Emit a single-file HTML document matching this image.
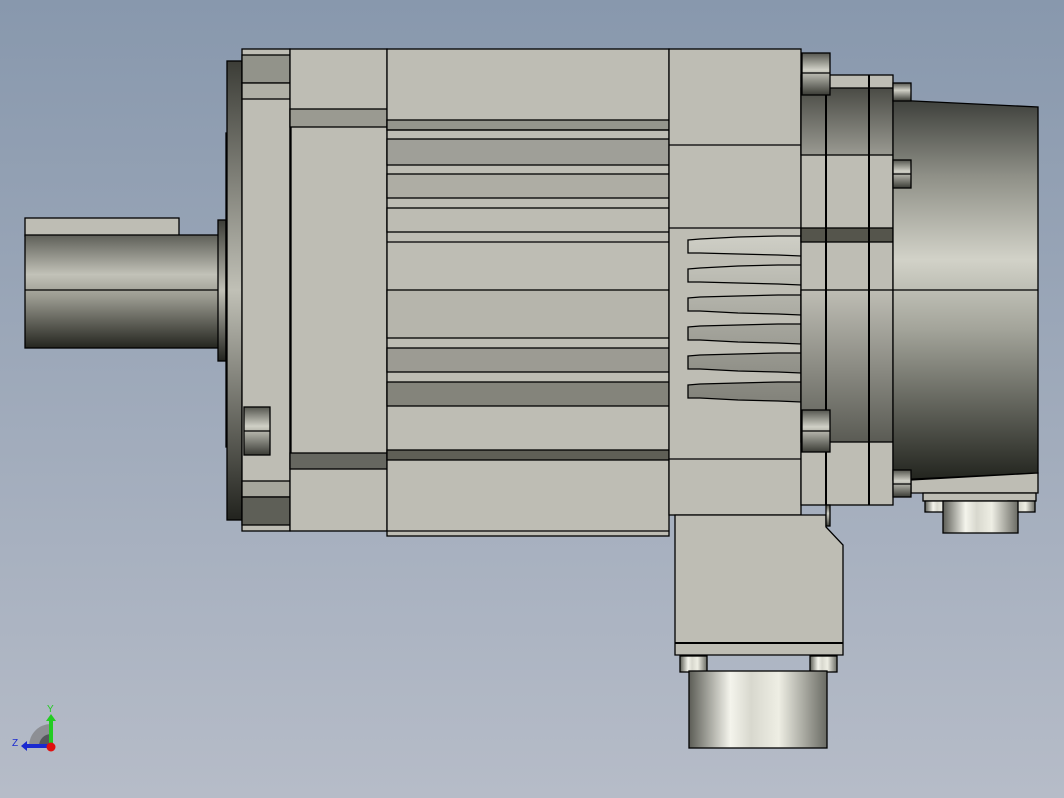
<!DOCTYPE html>
<html><head><meta charset="utf-8"><style>
html,body{margin:0;padding:0;width:1064px;height:798px;overflow:hidden}
svg{display:block}
</style></head><body>
<svg width="1064" height="798" viewBox="0 0 1064 798" xmlns="http://www.w3.org/2000/svg">
<defs>
<linearGradient id="bg" x1="0" y1="0" x2="0" y2="1"><stop offset="0" stop-color="#8898ad"/><stop offset="1" stop-color="#b6bcc8"/></linearGradient>
<linearGradient id="cylV" x1="0" y1="0" x2="0" y2="1"><stop offset="0" stop-color="#5e5f58"/><stop offset="0.35" stop-color="#c2c2b8"/><stop offset="0.55" stop-color="#9a9a90"/><stop offset="1" stop-color="#24251f"/></linearGradient>
<linearGradient id="flV" x1="0" y1="0" x2="0" y2="1"><stop offset="0" stop-color="#3c3d37"/><stop offset="0.5" stop-color="#c0c0b6"/><stop offset="1" stop-color="#22231e"/></linearGradient>
<linearGradient id="enc" x1="0" y1="0" x2="0" y2="1"><stop offset="0" stop-color="#3e403b"/><stop offset="0.2" stop-color="#8f9087"/><stop offset="0.42" stop-color="#d2d2c8"/><stop offset="0.6" stop-color="#a4a59b"/><stop offset="1" stop-color="#22241e"/></linearGradient>
<linearGradient id="ringT" x1="0" y1="0" x2="0" y2="1"><stop offset="0" stop-color="#4a4b45"/><stop offset="1" stop-color="#9a9a92"/></linearGradient>
<linearGradient id="ringB" x1="0" y1="0" x2="0" y2="1"><stop offset="0" stop-color="#bebdb4"/><stop offset="1" stop-color="#5a5b54"/></linearGradient>
<linearGradient id="cylH" x1="0" y1="0" x2="1" y2="0"><stop offset="0" stop-color="#5c5d56"/><stop offset="0.3" stop-color="#f4f4ec"/><stop offset="0.45" stop-color="#d8d8ce"/><stop offset="0.65" stop-color="#eeeee4"/><stop offset="1" stop-color="#6a6b64"/></linearGradient>
<linearGradient id="bolt" x1="0" y1="0" x2="0" y2="1"><stop offset="0" stop-color="#55564f"/><stop offset="0.4" stop-color="#d0d0c6"/><stop offset="1" stop-color="#3a3b35"/></linearGradient>
<linearGradient id="fin" gradientUnits="userSpaceOnUse" x1="0" y1="236" x2="0" y2="402"><stop offset="0" stop-color="#cfcfc6"/><stop offset="1" stop-color="#82827a"/></linearGradient>
</defs>
<rect width="1064" height="798" fill="url(#bg)"/>
<g stroke="#000" stroke-width="1.3">
<rect x="25" y="218" width="154" height="18" fill="#bebdb4"/>
<rect x="25" y="235" width="194" height="113" fill="url(#cylV)"/>
<line x1="25" y1="290" x2="242" y2="290"/>
<rect x="218" y="220" width="8" height="141" fill="url(#flV)"/>
<rect x="226" y="133" width="6" height="314" fill="url(#flV)"/>
<rect x="227" y="61" width="15" height="459" fill="url(#flV)"/>
<rect x="242" y="49" width="48" height="482" fill="#bebdb4"/>
<rect x="242" y="55" width="48" height="28" fill="#92938a"/>
<rect x="242" y="83" width="48" height="16" fill="#b0b0a6"/>
<rect x="242" y="481" width="48" height="16" fill="#a6a69c"/>
<rect x="242" y="497" width="48" height="28" fill="#5e5f57"/>
<rect x="244" y="407" width="26" height="48" fill="url(#bolt)"/>
<line x1="244" y1="431" x2="270" y2="431"/>
<rect x="290" y="49" width="97" height="482" fill="#bebdb4"/>
<rect x="290" y="109" width="97" height="18" fill="#9a9a91"/>
<line x1="291" y1="127" x2="291" y2="453"/>
<rect x="290" y="453" width="97" height="16" fill="#666760"/>
<rect x="387" y="49" width="282" height="487" fill="#bebdb4"/>
<rect x="387" y="120" width="282" height="10" fill="#94958c"/>
<line x1="387" y1="130" x2="669" y2="130"/>
<rect x="387" y="139" width="282" height="26" fill="#9f9f98"/>
<rect x="387" y="174" width="282" height="24" fill="#aeada4"/>
<rect x="387" y="208" width="282" height="24" fill="#bdbcb3"/>
<line x1="387" y1="242" x2="669" y2="242"/>
<rect x="387" y="290" width="282" height="48" fill="#b6b5ac"/>
<rect x="387" y="348" width="282" height="24" fill="#9c9b93"/>
<rect x="387" y="382" width="282" height="24" fill="#84847b"/>
<rect x="387" y="450" width="282" height="10" fill="#5f5f56"/>
<line x1="387" y1="531" x2="669" y2="531"/>
<rect x="669" y="49" width="132" height="466" fill="#bebdb4"/>
<line x1="669" y1="145" x2="801" y2="145"/>
<line x1="669" y1="228" x2="801" y2="228"/>
<line x1="669" y1="459" x2="801" y2="459"/>
<g fill="url(#fin)">
<path d="M688 240 L700 239 L738 237 L778 236 L801 236 L801 256 L778 255 L738 254 L700 253 L688 253 Z"/>
<path d="M688 269 L700 268 L738 266 L778 265 L801 265 L801 285 L778 284 L738 283 L700 282 L688 282 Z"/>
<path d="M688 298 L700 297 L738 296 L778 295 L801 295 L801 315 L778 314 L738 313 L700 311 L688 311 Z"/>
<path d="M688 327 L700 326 L738 325 L778 324 L801 324 L801 344 L778 343 L738 342 L700 340 L688 340 Z"/>
<path d="M688 356 L700 355 L738 354 L778 353 L801 353 L801 373 L778 372 L738 371 L700 369 L688 369 Z"/>
<path d="M688 385 L700 384 L738 383 L778 382 L801 382 L801 402 L778 401 L738 400 L700 398 L688 398 Z"/>
</g>
<path d="M675 515 L826 515 L826 527 L843 545 L843 655 L675 655 Z" fill="#bebdb4"/>
<line x1="675" y1="643" x2="843" y2="643" stroke-width="2"/>
<rect x="680" y="656" width="27" height="16" fill="url(#cylH)"/>
<rect x="810" y="656" width="27" height="16" fill="url(#cylH)"/>
<rect x="689" y="671" width="138" height="77" fill="url(#cylH)"/>
<rect x="801" y="75" width="92" height="430" fill="#bebdb4"/>
<rect x="801" y="88" width="92" height="67" fill="url(#ringT)"/>
<rect x="801" y="290" width="92" height="152" fill="url(#ringB)"/>
<rect x="801" y="228" width="92" height="14" fill="#55554c"/>
<line x1="826" y1="88" x2="826" y2="505" stroke-width="2"/>
<line x1="869" y1="75" x2="869" y2="505" stroke-width="2"/>
<rect x="826" y="505" width="4" height="21" fill="url(#bolt)"/>
<rect x="802" y="53" width="28" height="42" fill="url(#bolt)"/>
<line x1="802" y1="73" x2="830" y2="73"/>
<rect x="802" y="410" width="28" height="42" fill="url(#bolt)"/>
<line x1="802" y1="431" x2="830" y2="431"/>
<path d="M893 100 L1038 107 L1038 473 L893 480 Z" fill="url(#enc)"/>
<line x1="893" y1="290" x2="1038" y2="290"/>
<path d="M911 480 L1038 473 L1038 493 L911 493 Z" fill="#bebdb4"/>
<rect x="923" y="493" width="113" height="8" fill="#bebdb4"/>
<rect x="925" y="501" width="27" height="11" fill="url(#cylH)"/>
<rect x="1008" y="501" width="27" height="11" fill="url(#cylH)"/>
<rect x="943" y="501" width="75" height="32" fill="url(#cylH)"/>
<rect x="893" y="83" width="18" height="18" fill="url(#bolt)"/>
<rect x="893" y="160" width="18" height="28" fill="url(#bolt)"/>
<line x1="893" y1="174" x2="911" y2="174"/>
<rect x="893" y="470" width="18" height="27" fill="url(#bolt)"/>
<line x1="893" y1="484" x2="911" y2="484"/>
</g>
<g>
<path d="M29 746 A22 22 0 0 1 51 724 L51 746 Z" fill="#8d8f94"/>
<path d="M39 746 A12 12 0 0 1 51 734 L51 746 Z" fill="#55575c"/>
<rect x="49" y="720" width="4" height="26" fill="#22cc22"/>
<path d="M46 721 L51 714 L56 721 Z" fill="#22cc22"/>
<rect x="26" y="744" width="25" height="4" fill="#1a2ad0"/>
<path d="M27 741 L21 746 L27 751 Z" fill="#1a2ad0"/>
<circle cx="51" cy="747" r="4.5" fill="#e01010"/>
<text x="47" y="712" font-family="Liberation Sans, sans-serif" font-size="10" fill="#22cc22">Y</text>
<text x="12" y="746" font-family="Liberation Sans, sans-serif" font-size="10" fill="#1a2ad0">Z</text>
</g>
</svg>
</body></html>
